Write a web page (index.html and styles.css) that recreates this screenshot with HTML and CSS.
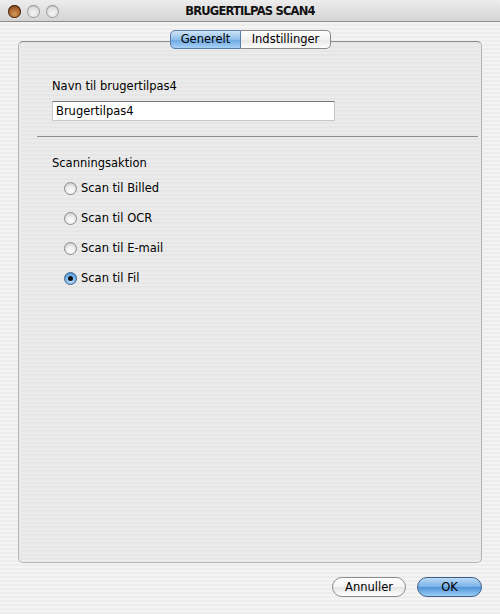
FILE: index.html
```html
<!DOCTYPE html>
<html>
<head>
<meta charset="utf-8">
<link rel="stylesheet" href="styles.css">
</head>
<body>
<div class="window">
  <div class="titlebar">
    <div class="lights">
      <span class="light close"></span>
      <span class="light"></span>
      <span class="light"></span>
    </div>
    <div class="title">BRUGERTILPAS SCAN4</div>
  </div>
  <div class="content">
    <div class="tabs">
      <div class="tab active">Generelt</div>
      <div class="tab second">Indstillinger</div>
    </div>
    <div class="box">
      <div class="label">Navn til brugertilpas4</div>
      <div class="input">Brugertilpas4</div>
      <div class="sep"></div>
      <div class="label section">Scanningsaktion</div>
      <div class="radios">
        <div class="radio"><span class="dot"></span>Scan til Billed</div>
        <div class="radio"><span class="dot"></span>Scan til OCR</div>
        <div class="radio"><span class="dot"></span>Scan til E-mail</div>
        <div class="radio checked"><span class="dot"></span>Scan til Fil</div>
      </div>
    </div>
    <div class="buttons">
      <div class="btn">Annuller</div>
      <div class="btn default">OK</div>
    </div>
  </div>
</div>
</body>
</html>
```
FILE: styles.css
```css
*, *::before, *::after {
  box-sizing: border-box;
}
html, body {
  margin: 0;
  padding: 0;
}
body {
  width: 500px;
  height: 614px;
  overflow: hidden;
  font-family: "DejaVu Sans", "Liberation Sans", sans-serif;
  font-size: 11px;
  color: #000;
}
.window {
  width: 500px;
  height: 614px;
  display: flex;
  flex-direction: column;
  background: repeating-linear-gradient(to bottom, #ededed 0px, #ededed 2px, #f4f4f4 2px, #f4f4f4 4px);
}
.titlebar {
  flex: 0 0 22px;
  height: 22px;
  border-bottom: 1px solid #8e8e8e;
  background: linear-gradient(to bottom, #ededed, #d4d4d4);
  display: flex;
  align-items: center;
  border-radius: 5px 5px 0 0;
}
.lights {
  display: flex;
  gap: 6px;
  padding-left: 8px;
  padding-top: 1px;
}
.light {
  width: 13px;
  height: 13px;
  border-radius: 50%;
  background: radial-gradient(circle at 50% 65%, #f6f6f6 0%, #dedede 55%, #a8a8a8 100%);
  box-shadow: inset 0 0 0 1px #9a9a9a;
}
.light.close {
  background: radial-gradient(circle at 50% 70%, #d69a5c 0%, #a2602a 55%, #5a3212 100%);
  box-shadow: inset 0 0 0 1px #4a2a10;
}
.title {
  flex: 1;
  text-align: center;
  font-weight: bold;
  font-size: 11.5px;
  letter-spacing: -0.8px;
  margin-right: 59px;
  color: #111;
}
.content {
  flex: 1;
  display: flex;
  flex-direction: column;
  padding: 8px 18px 0 18px;
}
.tabs {
  display: flex;
  justify-content: center;
  margin-bottom: -8px;
  margin-left: 1px;
  position: relative;
  z-index: 1;
  height: 19px;
  flex: 0 0 19px;
}
.tab {
  height: 19px;
  line-height: 17px;
  border: 1px solid #8a8a8a;
  background: linear-gradient(to bottom, #ffffff, #f2f2f2 50%, #e6e6e6 51%, #fdfdfd);
  text-align: center;
  font-size: 11.5px;
}
.tab.active {
  width: 71px;
  border-radius: 5px 0 0 5px;
  background: linear-gradient(to bottom, #cfe3f7, #8fbeea 50%, #6aa6e0 51%, #a8d2f6);
  border-color: #5b7fa8;
}
.tab.second {
  width: 90px;
  border-radius: 0 5px 5px 0;
  border-left: none;
}
.box {
  flex: 0 0 522px;
  height: 522px;
  border: 1px solid #b4b4b4;
  border-top-color: #8c8c8c;
  border-radius: 5px;
  background: repeating-linear-gradient(to bottom, #e6e6e6 0px, #e6e6e6 2px, #ebebeb 2px, #ebebeb 4px);
  padding: 37px 3px 0 33px;
  display: flex;
  flex-direction: column;
}
.label {
  line-height: 14px;
  font-size: 11.5px;
}
.input {
  margin-top: 8px;
  width: 283px;
  height: 20px;
  line-height: 18px;
  background: #fff;
  border: 1px solid #c8c8c8;
  border-top-color: #7a7a7a;
  padding-left: 3px;
  font-size: 11.5px;
}
.sep {
  margin-top: 15px;
  margin-left: -15px;
  height: 1px;
  flex: 0 0 1px;
  background: #8e8e8e;
}
.section {
  margin-top: 19px;
}
.radios {
  margin-top: 10px;
  margin-left: 12px;
  display: flex;
  flex-direction: column;
  gap: 14px;
}
.radio {
  display: flex;
  align-items: center;
  height: 16px;
  font-size: 11.5px;
}
.dot {
  width: 13px;
  height: 13px;
  border-radius: 50%;
  border: 1px solid #8a8a8a;
  background: radial-gradient(circle at 50% 70%, #ffffff 0%, #f0f0f0 40%, #c4c4c4 100%);
  margin-right: 4px;
  position: relative;
}
.radio.checked .dot {
  border-color: #3b5f8c;
  background: radial-gradient(circle at 50% 70%, #c6e4fb 0%, #7bb6ea 50%, #3e86d0 100%);
}
.radio.checked .dot::after {
  content: "";
  position: absolute;
  width: 5px;
  height: 5px;
  border-radius: 50%;
  background: #111;
  left: 3px;
  top: 3px;
}
.buttons {
  margin-top: 14px;
  display: flex;
  justify-content: flex-end;
  gap: 11px;
}
.btn {
  height: 20px;
  line-height: 18px;
  border: 1px solid #8a8a8a;
  border-radius: 10px;
  background: linear-gradient(to bottom, #ffffff, #f4f4f4 50%, #e4e4e4 51%, #ffffff);
  text-align: center;
  width: 74px;
  font-size: 11.5px;
}
.btn.default {
  width: 65px;
  border-color: #3f5f8a;
  background: linear-gradient(to bottom, #bcdaf6, #78b0e6 50%, #4f93d8 51%, #9ccdf4);
}
```
